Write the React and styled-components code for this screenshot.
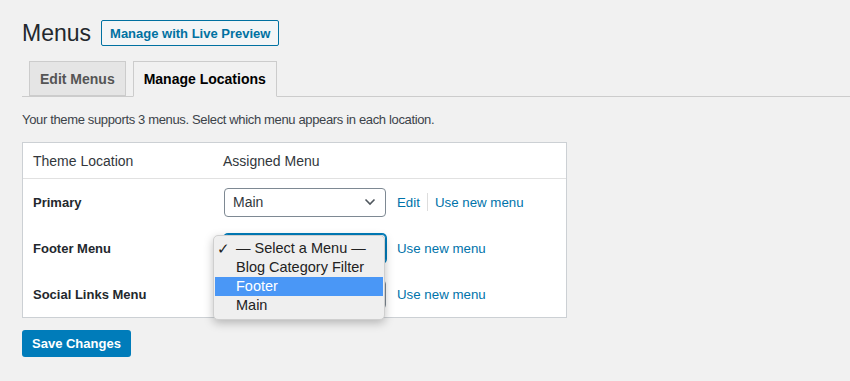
import React from "react";
import styled, { createGlobalStyle } from "styled-components";

const GlobalStyle = createGlobalStyle`
  body {
    margin: 0;
    background: #f1f1f1;
    font-family: "Liberation Sans", Arial, sans-serif;
    color: #23282d;
  }
`;

const locations = [
  { label: "Primary", value: "Main", edit: true },
  { label: "Footer Menu", value: "", focused: true, open: true },
  { label: "Social Links Menu", value: "" },
];

const options = ["— Select a Menu —", "Blog Category Filter", "Footer", "Main"];

function Chevron() {
  return (
    <svg width="12" height="8" viewBox="0 0 12 8">
      <path d="M1.5 1.5 L6 6 L10.5 1.5" fill="none" stroke="#50575e" strokeWidth="1.6" />
    </svg>
  );
}

function Dropdown() {
  return (
    <Popup>
      {options.map((o, i) => (
        <PopupItem key={o} selected={i === 2}>
          {i === 0 && <Check>✓</Check>}
          {o}
        </PopupItem>
      ))}
    </Popup>
  );
}

export default function App() {
  return (
    <>
      <GlobalStyle />
      <Wrap>
        <TitleRow>
          <Title>Menus</Title>
          <PreviewButton>Manage with Live Preview</PreviewButton>
        </TitleRow>
        <Tabs>
          <Tab>Edit Menus</Tab>
          <Tab active>Manage Locations</Tab>
        </Tabs>
        <Description>
          Your theme supports 3 menus. Select which menu appears in each location.
        </Description>
        <Table>
          <HeadRow>
            <LabelCell>Theme Location</LabelCell>
            <Cell>Assigned Menu</Cell>
          </HeadRow>
          {locations.map((loc) => (
            <Row key={loc.label}>
              <LabelCell strong>{loc.label}</LabelCell>
              <Cell>
                <SelectBox focused={loc.focused}>
                  <span>{loc.value}</span>
                  <Chevron />
                  {loc.open && <Dropdown />}
                </SelectBox>
                <Links>
                  {loc.edit && (
                    <>
                      <LinkText>Edit</LinkText>
                      <Divider />
                    </>
                  )}
                  <LinkText>Use new menu</LinkText>
                </Links>
              </Cell>
            </Row>
          ))}
        </Table>
        <SaveButton>Save Changes</SaveButton>
      </Wrap>
    </>
  );
}

// page

const Wrap = styled.div`
  padding: 18px 0 24px 22px;
`;

const TitleRow = styled.div`
  display: flex;
  align-items: center;
  gap: 10px;
  height: 30px;
`;

const Title = styled.h1`
  margin: 0;
  font-size: 23px;
  font-weight: 400;
  color: #23282d;
`;

const PreviewButton = styled.div`
  box-sizing: border-box;
  height: 26px;
  padding: 0 8px;
  display: flex;
  align-items: center;
  border: 1px solid #0071a1;
  border-radius: 2px;
  background: #f3f5f6;
  color: #0071a1;
  font-size: 13px;
  font-weight: 700;
`;

// tabs

const Tabs = styled.div`
  display: flex;
  gap: 7px;
  margin-top: 13px;
  padding-left: 7px;
  border-bottom: 1px solid #ccc;
  height: 35px;
`;

const Tab = styled.div`
  box-sizing: border-box;
  height: ${(p) => (p.active ? "36px" : "35px")};
  padding: 0 10px;
  display: flex;
  align-items: center;
  border: 1px solid #ccc;
  border-bottom-color: ${(p) => (p.active ? "#f1f1f1" : "#ccc")};
  background: ${(p) => (p.active ? "#f1f1f1" : "#e5e5e5")};
  color: ${(p) => (p.active ? "#000" : "#555")};
  font-size: 14px;
  font-weight: 700;
`;

const Description = styled.p`
  margin: 15px 0 15px;
  font-size: 13px;
  letter-spacing: -0.35px;
  color: #3c434a;
`;

// table

const Table = styled.div`
  width: 545px;
  box-sizing: border-box;
  background: #fff;
  border: 1px solid #ccd0d4;
`;

const HeadRow = styled.div`
  display: flex;
  align-items: center;
  height: 35px;
  border-bottom: 1px solid #e1e1e1;
  font-size: 14px;
  color: #32373c;
`;

const Row = styled.div`
  display: flex;
  align-items: center;
  height: 46px;
`;

const LabelCell = styled.div`
  width: 200px;
  padding-left: 10px;
  box-sizing: border-box;
  font-size: ${(p) => (p.strong ? "13px" : "14px")};
  font-weight: ${(p) => (p.strong ? 700 : 400)};
  color: ${(p) => (p.strong ? "#23282d" : "#32373c")};
`;

const Cell = styled.div`
  display: flex;
  align-items: center;
  gap: 11px;
`;

const SelectBox = styled.div`
  position: relative;
  box-sizing: border-box;
  width: 162px;
  height: 29px;
  margin-left: 1px;
  padding: 0 9px 0 8px;
  display: flex;
  align-items: center;
  justify-content: space-between;
  background: #fff;
  border: 1px solid ${(p) => (p.focused ? "#007cba" : "#7e8993")};
  box-shadow: ${(p) => (p.focused ? "0 0 0 1px #007cba" : "none")};
  border-radius: 4px;
  font-size: 14px;
  color: #32373c;
`;

const Links = styled.div`
  display: flex;
  align-items: center;
  gap: 7px;
`;

const LinkText = styled.span`
  font-size: 13.3px;
  color: #0073aa;
`;

const Divider = styled.span`
  width: 1px;
  height: 18px;
  background: #ddd;
`;

// native dropdown popup

const Popup = styled.div`
  position: absolute;
  left: -12px;
  top: 0;
  z-index: 2;
  width: 172px;
  box-sizing: border-box;
  padding: 3px 1px 4px;
  background: #efefef;
  border: 1px solid #cfcfcf;
  border-radius: 5px;
  box-shadow: 0 3px 10px rgba(0, 0, 0, 0.25);
`;

const PopupItem = styled.div`
  position: relative;
  height: 19px;
  line-height: 19px;
  padding-left: 21px;
  font-size: 14.5px;
  color: ${(p) => (p.selected ? "#fff" : "#222")};
  background: ${(p) => (p.selected ? "#4a97f6" : "transparent")};
`;

const Check = styled.span`
  position: absolute;
  left: 2px;
  font-size: 15px;
`;

const SaveButton = styled.div`
  display: inline-flex;
  align-items: center;
  margin-top: 12px;
  height: 27px;
  padding: 0 10px;
  background: #007cba;
  border-radius: 3px;
  color: #fff;
  font-size: 13px;
  font-weight: 700;
`;
